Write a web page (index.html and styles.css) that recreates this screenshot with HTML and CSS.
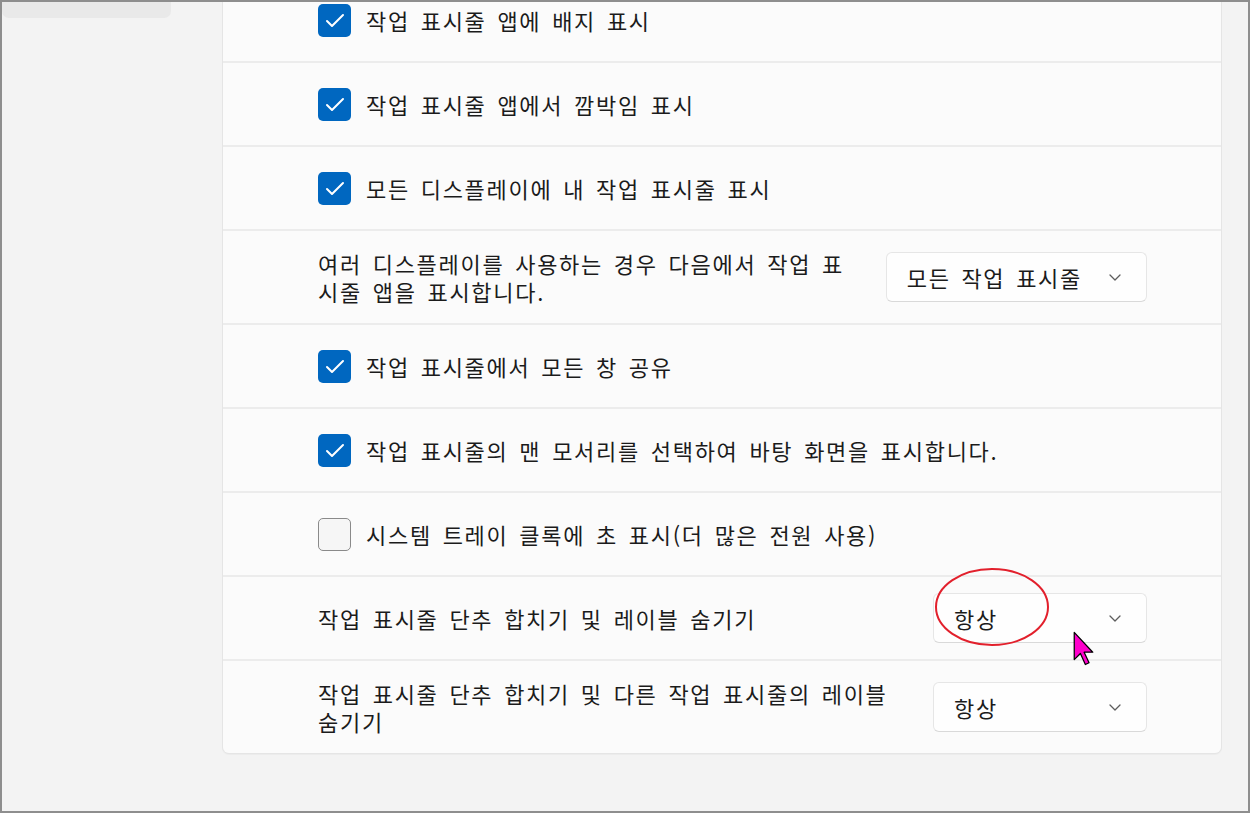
FILE: index.html
```html
<!DOCTYPE html>
<html lang="ko">
<head>
<meta charset="utf-8">
<title>작업 표시줄 동작</title>
<link rel="stylesheet" href="styles.css">
</head>
<body>
<div class="window">
  <aside class="sidebar">
    <div class="nav-item"></div>
  </aside>
  <main class="main">
    <section class="card">
      <div class="row">
        <label class="check"><span class="box on"><svg viewBox="0 0 33 33"><polyline points="9,17 14,22 25,11"/></svg></span><span class="text">작업 표시줄 앱에 배지 표시</span></label>
      </div>
      <div class="row">
        <label class="check"><span class="box on"><svg viewBox="0 0 33 33"><polyline points="9,17 14,22 25,11"/></svg></span><span class="text">작업 표시줄 앱에서 깜박임 표시</span></label>
      </div>
      <div class="row">
        <label class="check"><span class="box on"><svg viewBox="0 0 33 33"><polyline points="9,17 14,22 25,11"/></svg></span><span class="text">모든 디스플레이에 내 작업 표시줄 표시</span></label>
      </div>
      <div class="row split">
        <span class="desc">여러 디스플레이를 사용하는 경우 다음에서 작업 표<br>시줄 앱을 표시합니다.</span>
        <div class="select"><span>모든 작업 표시줄</span><svg class="chev" viewBox="0 0 12 7"><polyline points="1,1 6,6 11,1"/></svg></div>
      </div>
      <div class="row">
        <label class="check"><span class="box on"><svg viewBox="0 0 33 33"><polyline points="9,17 14,22 25,11"/></svg></span><span class="text">작업 표시줄에서 모든 창 공유</span></label>
      </div>
      <div class="row">
        <label class="check"><span class="box on"><svg viewBox="0 0 33 33"><polyline points="9,17 14,22 25,11"/></svg></span><span class="text">작업 표시줄의 맨 모서리를 선택하여 바탕 화면을 표시합니다.</span></label>
      </div>
      <div class="row">
        <label class="check"><span class="box off"></span><span class="text">시스템 트레이 클록에 초 표시(더 많은 전원 사용)</span></label>
      </div>
      <div class="row split">
        <span class="desc">작업 표시줄 단추 합치기 및 레이블 숨기기</span>
        <div class="select narrow"><span>항상</span><svg class="chev" viewBox="0 0 12 7"><polyline points="1,1 6,6 11,1"/></svg></div>
      </div>
      <div class="row split">
        <span class="desc">작업 표시줄 단추 합치기 및 다른 작업 표시줄의 레이블<br>숨기기</span>
        <div class="select narrow"><span>항상</span><svg class="chev" viewBox="0 0 12 7"><polyline points="1,1 6,6 11,1"/></svg></div>
      </div>
    </section>
  </main>
  <svg class="mark" viewBox="0 0 120 84"><ellipse cx="60" cy="42" rx="56" ry="38"/></svg>
  <svg class="cursor" viewBox="0 0 17 28"><path d="M1,1 L1,23 L6,18 L10,27 L13,25.5 L9,17 L16,17 Z"/></svg>
</div>
</body>
</html>
```

FILE: styles.css
```css
* { box-sizing: border-box; }
html, body { margin: 0; padding: 0; }
body {
  font-family: "Noto Sans CJK KR", "Noto Sans", sans-serif;
  color: #1b1b1b;
  background: #f3f3f3;
}
.window {
  position: relative;
  width: 1250px;
  height: 813px;
  border: 2px solid #8e8e8e;
  background: #f3f3f3;
  display: flex;
  overflow: hidden;
}
.sidebar {
  width: 169px;
  flex: none;
}
.nav-item {
  height: 16px;
  background: #e9e9e9;
  border-radius: 0 0 7px 7px;
}
.main {
  flex: 1;
  padding-left: 51px;
  padding-right: 26px;
}
.card {
  margin-top: -24px;
  background-color: #ececec;
  border: 1px solid #e5e5e5;
  border-radius: 7px;
  display: flex;
  flex-direction: column;
  gap: 2px;
  box-shadow: 0 1px 1px rgba(0,0,0,0.03);
}
.row {
  background: #fbfbfb;
  min-height: 82px;
  padding: 16px 74px 16px 95px;
  display: flex;
  align-items: center;
  font-size: 22px;
  line-height: 28px;
  letter-spacing: 1.7px;
  word-spacing: 3px;
}
.row:first-child { border-radius: 6px 6px 0 0; }
.row:last-child { border-radius: 0 0 6px 6px; }
.split { justify-content: space-between; }
.check {
  display: flex;
  align-items: center;
  gap: 15px;
}
.box {
  width: 33px;
  height: 33px;
  border-radius: 5px;
  flex: none;
  display: block;
}
.box.on { background: #0067c0; }
.box.on svg { width: 33px; height: 33px; display: block; }
.box.on polyline { fill: none; stroke: #fff; stroke-width: 2; stroke-linecap: round; stroke-linejoin: round; }
.box.off { background: #f6f6f6; border: 1.5px solid #8a8a8a; }
.desc { display: block; padding: 2px 0; }
.select {
  min-width: 261px;
  height: 50px;
  padding: 0 25px 0 20px;
  display: flex;
  align-items: center;
  justify-content: space-between;
  gap: 27px;
  background: #fefefe;
  border: 1px solid #e6e6e6;
  border-bottom-color: #d9d9d9;
  border-radius: 6px;
  font-size: 22px;
}
.select.narrow { min-width: 214px; }
.chev { width: 12px; height: 7px; flex: none; }
.chev polyline { fill: none; stroke: #5d5d5d; stroke-width: 1.3; stroke-linecap: round; stroke-linejoin: round; }
.mark {
  position: absolute;
  left: 930px;
  top: 563px;
  width: 120px;
  height: 84px;
  overflow: visible;
}
.mark ellipse { fill: none; stroke: #e2202c; stroke-width: 2; }
.cursor {
  position: absolute;
  left: 1071px;
  top: 629px;
  width: 21px;
  height: 35px;
}
.cursor path { fill: #ff00cc; stroke: #000; stroke-width: 1; stroke-linejoin: round; }
```
